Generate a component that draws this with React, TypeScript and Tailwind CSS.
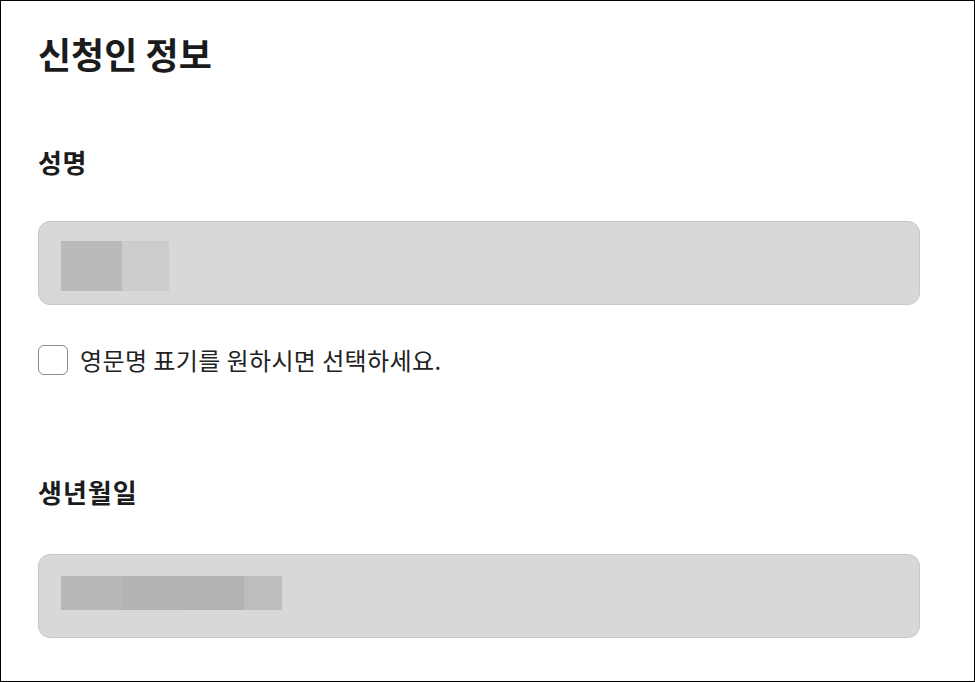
import React from 'react';

function Redacted({ blocks, h, top }: { blocks: { w: number; c: string }[]; h: string; top: string }) {
  return (
    <div className={`flex ${h} ${top}`}>
      {blocks.map((b, i) => (
        <div key={i} className="h-full" style={{ width: b.w, backgroundColor: b.c }} />
      ))}
    </div>
  );
}

export default function App() {
  return (
    <div
      className="h-[682px] w-[975px] overflow-hidden border border-black bg-white text-[#1b1b1b]"
      style={{ fontFamily: '"Noto Sans CJK KR", "Noto Sans", sans-serif' }}
    >
      <div className="pl-[37px] pr-[54px] pt-[30px]">
        <h1 className="text-[36px] font-bold leading-[44px]">신청인 정보</h1>

        {/* 성명 */}
        <div className="mt-[70px] text-[26px] font-bold leading-[34px] tracking-[0.5px]">성명</div>
        <div className="mt-[42px] flex h-[84px] items-start rounded-[12px] border border-[#c8c8c8] bg-[#d8d8d8] px-[22px]">
          <Redacted
            h="h-[50px]"
            top="mt-[19px]"
            blocks={[
              { w: 61, c: '#bababa' },
              { w: 47, c: '#cbcdcc' },
            ]}
          />
        </div>

        <label className="mt-[40px] flex items-center gap-[12px]">
          <span className="h-[30px] w-[30px] shrink-0 rounded-[6px] border border-[#8a8a8a] bg-white" />
          <span className="text-[24px] leading-[30px] tracking-[0.4px] text-[#222]">영문명 표기를 원하시면 선택하세요.</span>
        </label>

        {/* 생년월일 */}
        <div className="mt-[100px] text-[26px] font-bold leading-[34px] tracking-[1px]">생년월일</div>
        <div className="mt-[45px] flex h-[84px] items-start rounded-[12px] border border-[#c8c8c8] bg-[#d8d8d8] px-[22px]">
          <Redacted
            h="h-[34px]"
            top="mt-[21px]"
            blocks={[
              { w: 61, c: '#b7b7b7' },
              { w: 61, c: '#b4b4b4' },
              { w: 61, c: '#b3b3b3' },
              { w: 38, c: '#bdbdbd' },
            ]}
          />
        </div>
      </div>
    </div>
  );
}
